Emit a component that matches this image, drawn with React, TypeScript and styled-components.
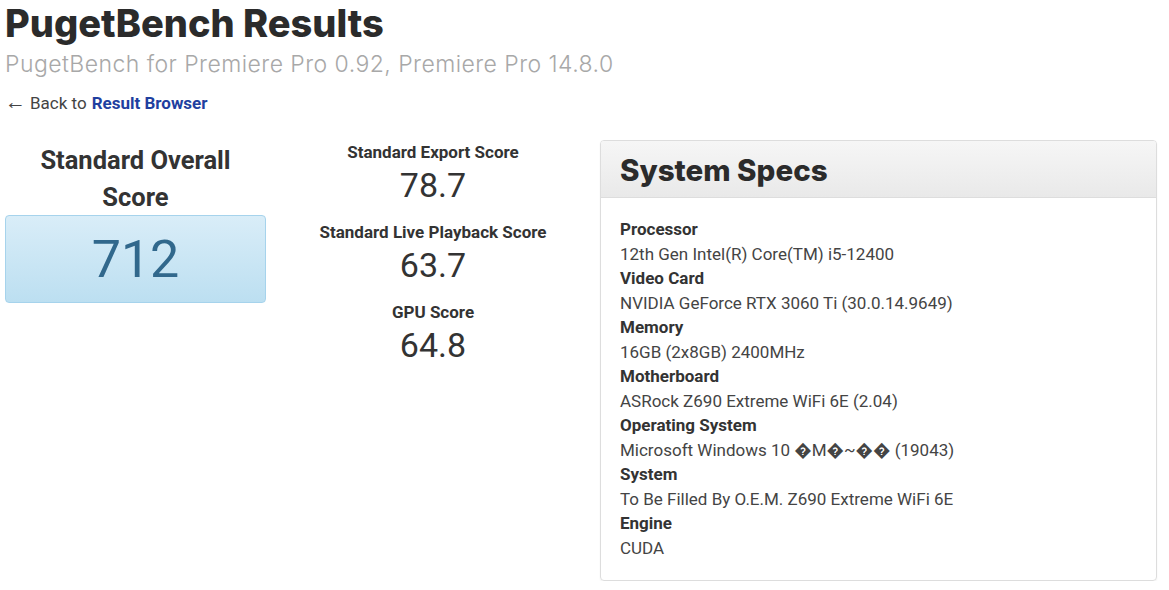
import React from "react";
import styled, { createGlobalStyle } from "styled-components";

const GlobalStyle = createGlobalStyle`
  html, body {
    margin: 0;
    padding: 0;
    background: #ffffff;
  }
  body {
    font-family: Roboto, "Liberation Sans", Arial, sans-serif;
    color: #333333;
  }
`;

const Page = styled.div`
  padding: 0 12px 0 5px;
`;

const Title = styled.h1`
  font-family: Inter, "Noto Sans", sans-serif;
  font-weight: 800;
  font-size: 38px;
  line-height: 46px;
  color: #2b2b2b;
  margin: 0;
`;

const Subtitle = styled.h2`
  font-family: Inter, "Noto Sans", sans-serif;
  font-weight: 300;
  font-size: 23px;
  line-height: 28px;
  letter-spacing: 0.45px;
  color: #a8a8a8;
  margin: 4px 0 0;
`;

const BackLine = styled.p`
  display: flex;
  align-items: baseline;
  font-size: 17px;
  line-height: 20px;
  color: #444444;
  margin: 14px 0 0;
`;

const Arrow = styled.span`
  font-size: 21px;
  margin-right: 4px;
`;

const BackLink = styled.a`
  color: #1f3fa0;
  font-weight: 700;
  text-decoration: none;
  margin-left: 5px;
`;

const Results = styled.div`
  display: grid;
  grid-template-columns: 261px 1fr 557px;
  align-items: start;
  margin-top: 27px;
`;

const OverallCol = styled.div`
  display: flex;
  flex-direction: column;
  align-items: center;
  padding-top: 2px;
`;

const OverallLabel = styled.h3`
  font-size: 25.5px;
  font-weight: 700;
  line-height: 37px;
  color: #333333;
  text-align: center;
  margin: 0 0 -1px;
`;

const OverallBox = styled.div`
  box-sizing: border-box;
  width: 100%;
  height: 88px;
  display: flex;
  align-items: center;
  justify-content: center;
  border: 1px solid #a6d3ec;
  border-radius: 4px;
  background: linear-gradient(to bottom, #d9edf8 0%, #bcdff1 100%);
  font-size: 52px;
  color: #31688c;
`;

const ScoresCol = styled.div`
  display: flex;
  flex-direction: column;
  align-items: center;
  gap: 14px;
  padding-top: 2px;
`;

const ScoreItem = styled.div`
  display: flex;
  flex-direction: column;
  align-items: center;
`;

const ScoreLabel = styled.div`
  font-size: 17px;
  font-weight: 700;
  line-height: 20px;
  color: #333333;
`;

const ScoreValue = styled.div`
  font-size: 34px;
  line-height: 46px;
  color: #333333;
`;

const Panel = styled.section`
  border: 1px solid #dddddd;
  border-radius: 4px;
  box-shadow: 0 1px 2px rgba(0, 0, 0, 0.06);
  overflow: hidden;
`;

const PanelHeader = styled.div`
  height: 56px;
  display: flex;
  align-items: center;
  padding: 0 19px;
  background: linear-gradient(to bottom, #f6f6f6 0%, #e9e9e9 100%);
  border-bottom: 1px solid #dddddd;
`;

const PanelTitle = styled.h3`
  font-family: Inter, "Noto Sans", sans-serif;
  font-weight: 800;
  font-size: 29.5px;
  color: #2b2b2b;
  margin: 2px 0 0;
`;

const PanelBody = styled.dl`
  margin: 0;
  padding: 19px 19px 20px;
  font-size: 17px;
  line-height: 24.5px;
`;

const SpecLabel = styled.dt`
  font-weight: 700;
  color: #333333;
`;

const SpecValue = styled.dd`
  margin: 0;
  color: #444444;
`;

const specs: [string, string][] = [
  ["Processor", "12th Gen Intel(R) Core(TM) i5-12400"],
  ["Video Card", "NVIDIA GeForce RTX 3060 Ti (30.0.14.9649)"],
  ["Memory", "16GB (2x8GB) 2400MHz"],
  ["Motherboard", "ASRock Z690 Extreme WiFi 6E (2.04)"],
  ["Operating System", "Microsoft Windows 10 \uFFFDM\uFFFD~\uFFFD\uFFFD (19043)"],
  ["System", "To Be Filled By O.E.M. Z690 Extreme WiFi 6E"],
  ["Engine", "CUDA"],
];

const scores = [
  { label: "Standard Export Score", value: "78.7" },
  { label: "Standard Live Playback Score", value: "63.7" },
  { label: "GPU Score", value: "64.8" },
];

const App = () => (
  <>
    <GlobalStyle />
    <Page>
      <Title>PugetBench Results</Title>
      <Subtitle>PugetBench for Premiere Pro 0.92, Premiere Pro 14.8.0</Subtitle>
      <BackLine>
        <Arrow>←</Arrow>
        <span>Back to</span>
        <BackLink href="#">Result Browser</BackLink>
      </BackLine>

      <Results>
        <OverallCol>
          <OverallLabel>
            Standard Overall
            <br />
            Score
          </OverallLabel>
          <OverallBox>712</OverallBox>
        </OverallCol>

        <ScoresCol>
          {scores.map((s) => (
            <ScoreItem key={s.label}>
              <ScoreLabel>{s.label}</ScoreLabel>
              <ScoreValue>{s.value}</ScoreValue>
            </ScoreItem>
          ))}
        </ScoresCol>

        <Panel>
          <PanelHeader>
            <PanelTitle>System Specs</PanelTitle>
          </PanelHeader>
          <PanelBody>
            {specs.map(([label, value]) => (
              <React.Fragment key={label}>
                <SpecLabel>{label}</SpecLabel>
                <SpecValue>{value}</SpecValue>
              </React.Fragment>
            ))}
          </PanelBody>
        </Panel>
      </Results>
    </Page>
  </>
);

export default App;
